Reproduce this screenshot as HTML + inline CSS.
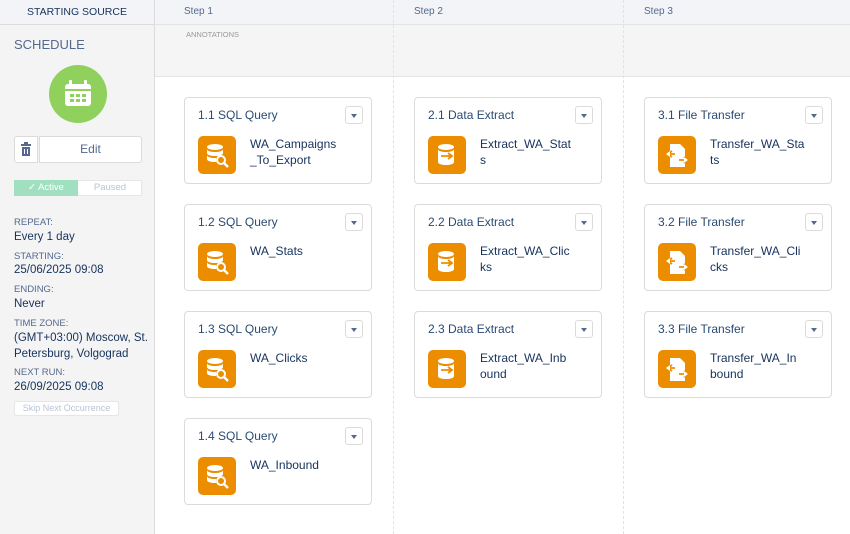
<!DOCTYPE html>
<html><head><meta charset="utf-8"><style>
*{box-sizing:border-box;margin:0;padding:0}
body{width:850px;height:534px;overflow:hidden;background:#fff;font-family:"Liberation Sans",sans-serif;position:relative;color:#16325c}
.abs{position:absolute}
#side{left:0;top:0;width:155px;height:534px;background:#f4f4f4;border-right:1px solid #dddbda}
.lbl{position:absolute;left:14px;font-size:9.5px;color:#54698d;text-transform:uppercase}
.val{position:absolute;left:14px;font-size:11.5px;color:#16325c;line-height:16px}
.card{position:absolute;width:188px;height:87px;border:1px solid #dddbda;border-radius:4px;background:#fff}
.card .t{position:absolute;left:13px;top:10px;font-size:12px;color:#2a4a73}
.card .dd{position:absolute;left:160px;top:8px;width:18px;height:18px;border:1px solid #dddbda;border-radius:3px;background:#fff}
.card .dd:after{content:"";position:absolute;left:5px;top:7px;border-left:3.5px solid transparent;border-right:3.5px solid transparent;border-top:4px solid #54698d}
.card .ic{position:absolute;left:13px;top:38px;width:38px;height:38px;border-radius:5px;background:#ec8d00}
.card .ic svg{width:38px;height:38px}
.card .n{position:absolute;left:65px;top:38px;width:110px;font-size:12px;line-height:16px;color:#16325c}
.vline{position:absolute;top:0;height:534px;border-left:1px dashed #e2e2e2}
</style></head><body>
<div id="side" class="abs">
  <div class="abs" style="left:0;top:0;width:154px;height:25px;background:#f3f4f7;border-bottom:1px solid #dddbda;font-size:10.5px;color:#16325c;text-align:center;line-height:25px">STARTING SOURCE</div>
  <div class="abs" style="left:14px;top:37px;font-size:13px;color:#54698d">SCHEDULE</div>
  <div class="abs" style="left:49px;top:65px;width:58px;height:58px;border-radius:50%;background:#8fd15c">
    <svg width="58" height="58" viewBox="0 0 58 58"><rect x="16" y="19" width="26" height="22" rx="3" fill="#fff"/><rect x="20" y="15" width="3" height="6" rx="1" fill="#fff"/><rect x="35" y="15" width="3" height="6" rx="1" fill="#fff"/><rect x="16" y="24" width="26" height="2" fill="#8fd15c"/>
    <g fill="#8fd15c"><rect x="21" y="29" width="4" height="3"/><rect x="27" y="29" width="4" height="3"/><rect x="33" y="29" width="4" height="3"/><rect x="21" y="34" width="4" height="3"/><rect x="27" y="34" width="4" height="3"/><rect x="33" y="34" width="4" height="3"/></g></svg>
  </div>
  <div class="abs" style="left:14px;top:136px;width:24px;height:27px;background:#fff;border:1px solid #dddbda;border-radius:3px 0 0 3px">
    <svg width="22" height="25" viewBox="0 0 22 25"><rect x="6" y="7" width="10" height="2" fill="#54698d"/><rect x="9" y="5" width="4" height="2" fill="#54698d"/><rect x="7" y="10" width="8" height="9" fill="#54698d"/><rect x="9" y="12" width="1" height="5" fill="#fff"/><rect x="12" y="12" width="1" height="5" fill="#fff"/></svg>
  </div>
  <div class="abs" style="left:39px;top:136px;width:103px;height:27px;background:#fff;border:1px solid #dddbda;border-radius:0 3px 3px 0;font-size:12px;color:#54698d;text-align:center;line-height:25px">Edit</div>
  <div class="abs" style="left:14px;top:180px;width:128px;height:16px;border:1px solid #e6e6e6;background:#fff;border-radius:2px"></div>
  <div class="abs" style="left:14px;top:180px;width:64px;height:16px;background:#a0e0c0;color:#fff;font-size:9.5px;text-align:center;line-height:16px">✓ Active</div>
  <div class="abs" style="left:78px;top:180px;width:64px;height:16px;color:#b8c4d6;font-size:9.5px;text-align:center;line-height:16px">Paused</div>
  <div class="lbl" style="top:217px">Repeat:</div><div class="val" style="top:229px">Every 1 day</div>
  <div class="lbl" style="top:251px">Starting:</div><div class="val" style="top:262px">25/06/2025 09:08</div>
  <div class="lbl" style="top:284px">Ending:</div><div class="val" style="top:296px">Never</div>
  <div class="lbl" style="top:318px">Time zone:</div><div class="val" style="top:330px;width:140px">(GMT+03:00) Moscow, St.<br>Petersburg, Volgograd</div>
  <div class="lbl" style="top:367px">Next run:</div><div class="val" style="top:379px">26/09/2025 09:08</div>
  <div class="abs" style="left:14px;top:401px;width:105px;height:15px;border:1px solid #e6e6e6;background:#fff;border-radius:2px;font-size:9px;color:#b8c4d6;text-align:center;line-height:13px">Skip Next Occurrence</div>
</div>
<div class="abs" style="left:155px;top:0;width:695px;height:25px;background:#f3f4f7;border-bottom:1px solid #e4e4e4"></div>
<div class="abs" style="left:155px;top:25px;width:695px;height:52px;background:#f5f5f5;border-bottom:1px solid #e4e4e4"></div>
<div class="vline" style="left:393px"></div><div class="vline" style="left:623px"></div>
<div class="abs" style="left:184px;top:6px;font-size:10px;color:#54698d">Step 1</div>
<div class="abs" style="left:414px;top:6px;font-size:10px;color:#54698d">Step 2</div>
<div class="abs" style="left:644px;top:6px;font-size:10px;color:#54698d">Step 3</div>
<div class="abs" style="left:186px;top:30px;font-size:7.5px;color:#999">ANNOTATIONS</div>

<svg width="0" height="0" style="position:absolute"><defs>
<symbol id="sql" viewBox="0 0 38 38"><g fill="#fff"><ellipse cx="17" cy="11" rx="8" ry="3"/><path d="M9 13c0 2 4 3 8 3s8-1 8-3v4c0 2-4 3-8 3s-8-1-8-3z"/><path d="M9 19c0 2 4 3 8 3h1v4h-1c-4 0-8-1-8-3z"/></g><circle cx="23" cy="24" r="4" fill="none" stroke="#fff" stroke-width="2"/><path d="M26 27l4 4" stroke="#fff" stroke-width="2.5"/></symbol>
<symbol id="ext" viewBox="0 0 38 38"><g fill="#fff"><ellipse cx="18" cy="11" rx="8" ry="3"/><path d="M10 13c0 2 4 3 8 3s8-1 8-3v13c0 2-4 3-8 3s-8-1-8-3z"/></g><path d="M13 20h10m-3-3l4 3-4 3" stroke="#ec8d00" stroke-width="1.8" fill="none"/></symbol>
<symbol id="ft" viewBox="0 0 38 38"><path d="M12 8h10l5 5v18H12z" fill="#fff"/><g stroke="#ec8d00" stroke-width="1.8" fill="none"><path d="M9 18h8m-3-3l-4 3 4 3"/><path d="M21 24h8m-3-3l4 3-4 3"/></g><path d="M8 18l4-3v6z M30 24l-4-3v6z" fill="#fff"/></symbol>
</defs></svg>

<div class="card" style="left:184px;top:97px"><div class="t">1.1 SQL Query</div><div class="dd"></div><div class="ic"><svg><use href="#sql"/></svg></div><div class="n">WA_Campaigns<br>_To_Export</div></div>
<div class="card" style="left:184px;top:204px"><div class="t">1.2 SQL Query</div><div class="dd"></div><div class="ic"><svg><use href="#sql"/></svg></div><div class="n">WA_Stats</div></div>
<div class="card" style="left:184px;top:311px"><div class="t">1.3 SQL Query</div><div class="dd"></div><div class="ic"><svg><use href="#sql"/></svg></div><div class="n">WA_Clicks</div></div>
<div class="card" style="left:184px;top:418px"><div class="t">1.4 SQL Query</div><div class="dd"></div><div class="ic"><svg><use href="#sql"/></svg></div><div class="n">WA_Inbound</div></div>

<div class="card" style="left:414px;top:97px"><div class="t">2.1 Data Extract</div><div class="dd"></div><div class="ic"><svg><use href="#ext"/></svg></div><div class="n">Extract_WA_Stat<br>s</div></div>
<div class="card" style="left:414px;top:204px"><div class="t">2.2 Data Extract</div><div class="dd"></div><div class="ic"><svg><use href="#ext"/></svg></div><div class="n">Extract_WA_Clic<br>ks</div></div>
<div class="card" style="left:414px;top:311px"><div class="t">2.3 Data Extract</div><div class="dd"></div><div class="ic"><svg><use href="#ext"/></svg></div><div class="n">Extract_WA_Inb<br>ound</div></div>

<div class="card" style="left:644px;top:97px"><div class="t">3.1 File Transfer</div><div class="dd"></div><div class="ic"><svg><use href="#ft"/></svg></div><div class="n">Transfer_WA_Sta<br>ts</div></div>
<div class="card" style="left:644px;top:204px"><div class="t">3.2 File Transfer</div><div class="dd"></div><div class="ic"><svg><use href="#ft"/></svg></div><div class="n">Transfer_WA_Cli<br>cks</div></div>
<div class="card" style="left:644px;top:311px"><div class="t">3.3 File Transfer</div><div class="dd"></div><div class="ic"><svg><use href="#ft"/></svg></div><div class="n">Transfer_WA_In<br>bound</div></div>
</body></html>
